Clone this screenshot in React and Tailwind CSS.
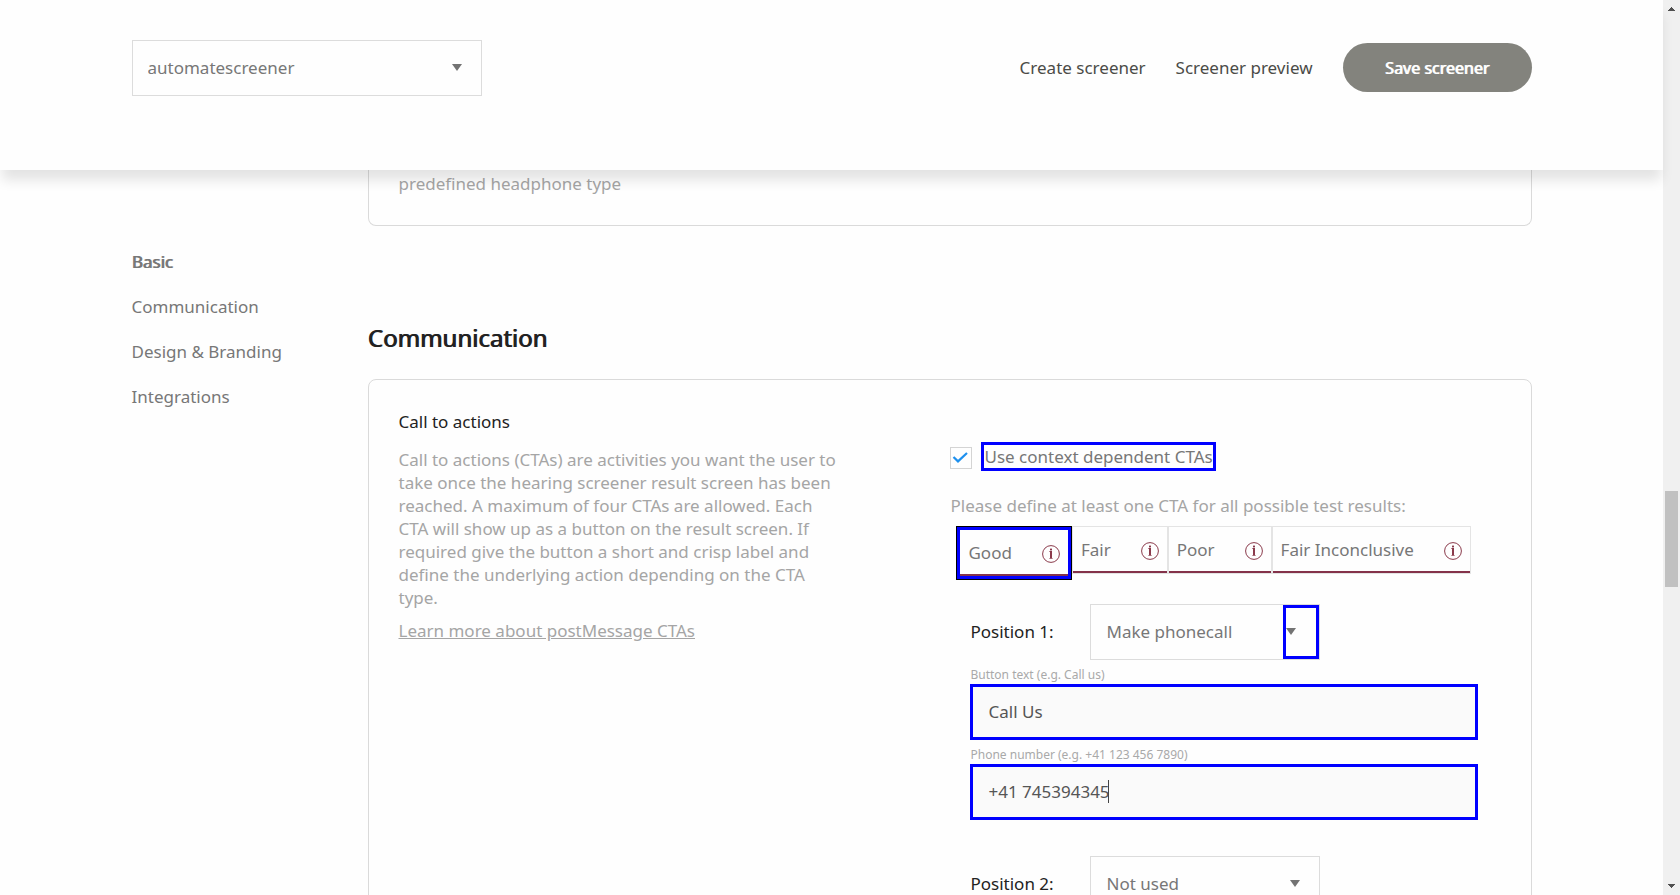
import React from "react";

const NAV = ["Basic", "Communication", "Design & Branding", "Integrations"];
const RESULTS = ["Good", "Fair", "Poor", "Fair Inconclusive"];

function Arrow() {
  return (
    <svg width="10" height="7" viewBox="0 0 10 7" className="block fill-[#737373]" aria-hidden="true">
      <path d="M0 0H10L5 7Z" />
    </svg>
  );
}

function InfoIcon() {
  return (
    <svg width="18" height="18" viewBox="0 0 18 18" className="mt-1 block shrink-0" fill="none" aria-hidden="true">
      <circle cx="9" cy="9" r="8.4" stroke="#8a3a4b" strokeWidth="1" />
      <rect x="8" y="3.6" width="2" height="1.8" fill="#8a3a4b" />
      <path d="M7.4 6.1H10V13H10.6V13.8H7.4V13H8V6.9H7.4Z" fill="#8a3a4b" />
    </svg>
  );
}

function Dropdown({ id, value, label, width, highlighted }) {
  return (
    <div className={`relative h-14 ${width}`}>
      <select
        id={id}
        aria-label={label}
        defaultValue={value}
        className="h-full w-full appearance-none rounded-none border border-[#dcdcdc] bg-[#fefefe] pb-[2px] pl-[15px] pr-12 text-[#777] outline-none"
      >
        <option>{value}</option>
      </select>
      {highlighted ? (
        <span className="pointer-events-none absolute bottom-px right-px top-px flex w-9 items-start border-3 border-[#0000ff] pt-5">
          <Arrow />
        </span>
      ) : (
        <span className="pointer-events-none absolute right-5 top-6">
          <Arrow />
        </span>
      )}
    </div>
  );
}

function Field({ id, label, value, caret }) {
  return (
    <div>
      <label htmlFor={id} className="block pt-[5px] text-[12px] leading-[19px] text-[#a9a9a9]">
        {label}
      </label>
      <div className="relative">
        <input
          id={id}
          type="text"
          defaultValue={value}
          className="block h-14 w-full border-3 border-[#0000ff] bg-[#fafafa] pb-[2px] pl-[15px] pr-4 text-[#555] outline-none"
        />
        {caret && <span className="absolute left-[138px] top-4 h-[23px] w-px bg-[#444]" />}
      </div>
    </div>
  );
}

function ResultTabs() {
  return (
    <div className="flex items-start pl-[6px]" role="tablist">
      {RESULTS.map((name, i) => (
        <button
          key={name}
          type="button"
          role="tab"
          aria-selected={i === 0}
          className={
            i === 0
              ? "border border-black text-[#777]"
              : "border border-[#e4e4e4] text-[#777]"
          }
        >
          <span className={i === 0 ? "block border-3 border-[#0000ff]" : "block"}>
            <span className="flex items-start gap-[30px] border-b-2 border-[#84324a] px-2 pb-[10px] pt-[11px]">
              {name}
              <InfoIcon />
            </span>
          </span>
        </button>
      ))}
    </div>
  );
}

function Scrollbar() {
  return (
    <div className="flex w-[17px] shrink-0 flex-col items-center justify-between bg-[#f0f0f0] py-[7px]" aria-hidden="true">
      <svg width="7" height="4" viewBox="0 0 7 4" shapeRendering="crispEdges" className="fill-[#505050]">
        <path d="M3 0h1v1h1v1h1v1h1v1H0V3h1V2h1V1h1z" />
      </svg>
      <div className="flex w-full grow flex-col items-center">
        <div className="grow-479 basis-0" />
        <div className="h-24 w-[13px] bg-[#c1c1c1]" />
        <div className="grow-297 basis-0" />
      </div>
      <svg width="7" height="4" viewBox="0 0 7 4" shapeRendering="crispEdges" className="fill-[#505050]">
        <path d="M0 0h7v1H6v1H5v1H4v1H3V3H2V2H1V1H0z" />
      </svg>
    </div>
  );
}

export default function App() {
  return (
    <div className="flex h-screen overflow-hidden bg-[#fefefe] font-['Noto_Sans',sans-serif] text-[17px] leading-[23px]">
      <div className="flex min-w-0 grow flex-col">
        <header className="relative z-10 shrink-0 bg-[#fefefe] pb-[74px] pt-10 shadow-[0_12px_12px_-2px_rgba(0,0,0,0.11)]">
          <div className="mx-auto flex max-w-[1400px] items-center justify-between">
            <Dropdown id="screener" label="Screener" value="automatescreener" width="w-[350px]" />
            <div className="flex items-center gap-[30px] pb-[2px] text-[#4b4b47]">
              <a href="#create">Create screener</a>
              <a href="#preview">Screener preview</a>
              <button
                type="button"
                className="h-[49px] w-[189px] rounded-full bg-[#83837d] pt-[2px] text-[16px] text-white [text-shadow:1px_0_0_currentColor]"
              >
                Save screener
              </button>
            </div>
          </div>
        </header>

        <div className="min-h-0 grow overflow-hidden">
          <div className="mx-auto flex max-w-[1400px]">
            <nav className="flex w-[236px] shrink-0 flex-col gap-[22px] pt-20 text-[#777]">
              {NAV.map((item, i) => (
                <a key={item} href="#section" className={i === 0 ? "[text-shadow:1px_0_0_currentColor]" : ""}>
                  {item}
                </a>
              ))}
            </nav>

            <main className="min-w-0 grow">
              <section className="rounded-b-lg border border-t-0 border-[#dadada] px-[30px] pb-[30px] pt-[2px] text-[#a5a5a5]">
                predefined headphone type
              </section>

              <h2 className="mb-[25px] mt-[95px] text-[24px] leading-[33px] text-[#222] [text-shadow:1px_0_0_currentColor]">
                Communication
              </h2>

              <section className="flex rounded-lg border border-[#dadada] p-[30px]">
                <div className="mr-[10%] w-2/5 shrink-0 text-[#a5a5a5]">
                  <h3 className="text-[#222]">Call to actions</h3>
                  <p className="mt-[15px]">
                    Call to actions (CTAs) are activities you want the user to take once the hearing screener result
                    screen has been reached. A maximum of four CTAs are allowed. Each CTA will show up as a button on
                    the result screen. If required give the button a short and crisp label and define the underlying
                    action depending on the CTA type.
                  </p>
                  <a href="#postmessage" className="mt-[10px] inline-block underline">
                    Learn more about postMessage CTAs
                  </a>
                </div>

                <div className="min-w-0 grow pl-px pt-8">
                  <div className="flex items-center gap-[9px]">
                    <span className="relative mt-[2px] h-[22px] w-[22px]">
                      <input
                        id="context"
                        type="checkbox"
                        defaultChecked
                        className="block h-full w-full appearance-none border border-[#d4d4d4] bg-[#fefefe]"
                      />
                      <svg
                        width="22"
                        height="22"
                        viewBox="0 0 22 22"
                        className="pointer-events-none absolute inset-0"
                        aria-hidden="true"
                      >
                        <path d="M3.5 10L8 14.4L17 6" fill="none" stroke="#1e90ee" strokeWidth="2.2" />
                      </svg>
                    </span>
                    <label htmlFor="context" className="border-3 border-[#0000ff] text-[#777]">
                      Use context dependent CTAs
                    </label>
                  </div>

                  <p className="mb-[9px] mt-[23px] text-[#a5a5a5]">
                    Please define at least one CTA for all possible test results:
                  </p>
                  <ResultTabs />

                  <div className="mt-6 pl-5 pr-[23px]">
                    <div className="flex items-center">
                      <label htmlFor="position1" className="w-[120px] pb-[2px] text-[#222]">
                        Position 1:
                      </label>
                      <Dropdown id="position1" value="Make phonecall" width="w-[230px]" highlighted />
                    </div>
                    <Field id="text" label="Button text (e.g. Call us)" value="Call Us" />
                    <Field id="phone" label="Phone number (e.g. +41 123 456 7890)" value="+41 745394345" caret />
                    <div className="mt-9 flex items-center">
                      <label htmlFor="position2" className="w-[120px] pb-[2px] text-[#222]">
                        Position 2:
                      </label>
                      <Dropdown id="position2" value="Not used" width="w-[230px]" />
                    </div>
                  </div>
                </div>
              </section>
            </main>
          </div>
        </div>
      </div>
      <Scrollbar />
    </div>
  );
}
